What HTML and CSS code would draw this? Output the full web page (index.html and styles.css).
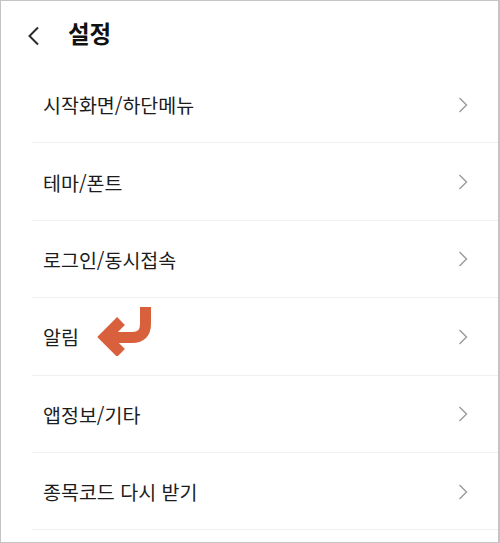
FILE: index.html
```html
<!DOCTYPE html>
<html lang="ko">
<head>
  <meta charset="UTF-8" />
  <meta name="viewport" content="width=device-width, initial-scale=1.0" />
  <title>설정</title>
  <link rel="stylesheet" href="styles.css">
</head>
<body>
  <div class="screen">
    <header class="topbar">
      <svg class="back" width="14" height="20" viewBox="0 0 14 20">
        <polyline points="11,1.5 2.5,10 11,18.5" fill="none" stroke="#2b2b2b" stroke-width="2" />
      </svg>
      <h1>설정</h1>
    </header>

    <ul class="menu">
      <li class="menu-item"><span>시작화면/하단메뉴</span><svg class="chev" width="10" height="16" viewBox="0 0 10 16"><polyline points="1.5,1 8.5,8 1.5,15" fill="none" stroke="#9a9a9a" stroke-width="1.4" /></svg></li>
      <li class="menu-item"><span>테마/폰트</span><svg class="chev" width="10" height="16" viewBox="0 0 10 16"><polyline points="1.5,1 8.5,8 1.5,15" fill="none" stroke="#9a9a9a" stroke-width="1.4" /></svg></li>
      <li class="menu-item"><span>로그인/동시접속</span><svg class="chev" width="10" height="16" viewBox="0 0 10 16"><polyline points="1.5,1 8.5,8 1.5,15" fill="none" stroke="#9a9a9a" stroke-width="1.4" /></svg></li>
      <li class="menu-item">
        <span>알림</span>
        <svg class="pointer" width="60" height="56" viewBox="0 0 60 56">
          <path d="M15 37.5 H37 Q50.5 37.5 50.5 24 V7" fill="none" stroke="#d8603c" stroke-width="11" />
          <polyline points="26,21 10,37 26,53" fill="none" stroke="#d8603c" stroke-width="11" />
        </svg>
        <svg class="chev" width="10" height="16" viewBox="0 0 10 16"><polyline points="1.5,1 8.5,8 1.5,15" fill="none" stroke="#9a9a9a" stroke-width="1.4" /></svg>
      </li>
      <li class="menu-item"><span>앱정보/기타</span><svg class="chev" width="10" height="16" viewBox="0 0 10 16"><polyline points="1.5,1 8.5,8 1.5,15" fill="none" stroke="#9a9a9a" stroke-width="1.4" /></svg></li>
      <li class="menu-item"><span>종목코드 다시 받기</span><svg class="chev" width="10" height="16" viewBox="0 0 10 16"><polyline points="1.5,1 8.5,8 1.5,15" fill="none" stroke="#9a9a9a" stroke-width="1.4" /></svg></li>
    </ul>
  </div>
</body>
</html>
```

FILE: styles.css
```css
html, body {
  margin: 0;
  padding: 0;
  background: #ffffff;
}
body {
  font-family: 'Noto Sans CJK KR', 'Noto Sans', sans-serif;
  color: #1c1c1c;
}
.screen {
  box-sizing: border-box;
  width: 500px;
  height: 543px;
  border: 1px solid #c4c4c4;
  border-right-width: 2px;
  overflow: hidden;
}
.topbar {
  height: 65px;
  display: flex;
  align-items: center;
  padding-left: 26px;
}
.back {
  display: block;
  margin-top: 4px;
}
.topbar h1 {
  margin: 0 0 0 27px;
  font-size: 23.5px;
  font-weight: 700;
  color: #111111;
  line-height: 1;
}
.menu {
  list-style: none;
  margin: 0 0 0 31px;
  padding: 0;
}
.menu-item {
  box-sizing: border-box;
  height: 77.4px;
  display: flex;
  align-items: center;
  padding: 1px 30px 0 11px;
  border-bottom: 1px solid #f0f0f0;
  font-size: 19.5px;
  position: relative;
}
.menu-item span {
  flex: 1;
}
.chev {
  display: block;
}
.pointer {
  position: absolute;
  left: 63px;
  top: 2px;
}
```
